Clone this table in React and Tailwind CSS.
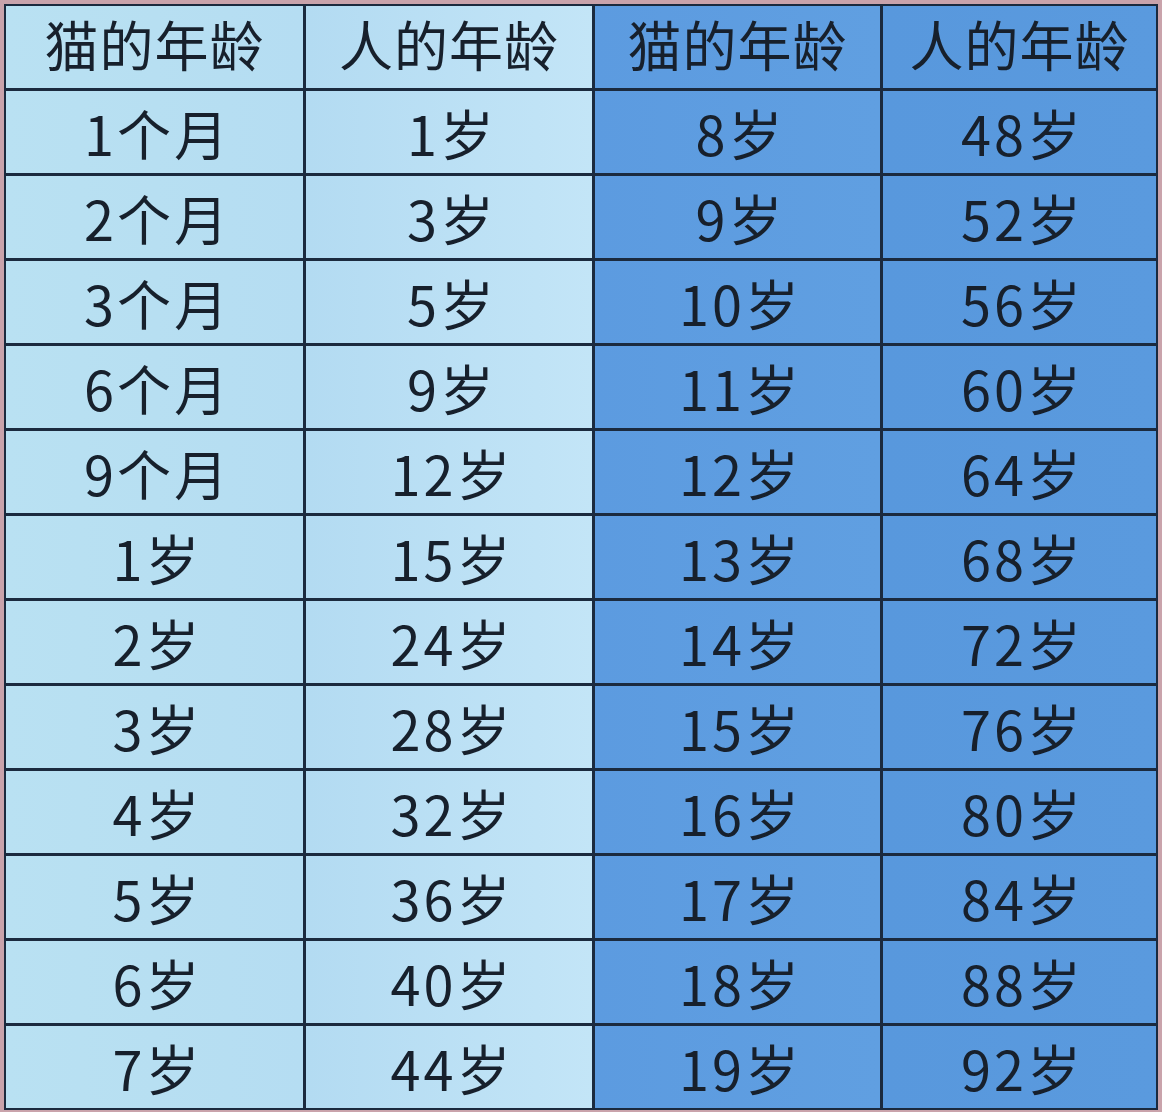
import React from 'react';

const rows = [
  ['1个月', '1岁', '8岁', '48岁'],
  ['2个月', '3岁', '9岁', '52岁'],
  ['3个月', '5岁', '10岁', '56岁'],
  ['6个月', '9岁', '11岁', '60岁'],
  ['9个月', '12岁', '12岁', '64岁'],
  ['1岁', '15岁', '13岁', '68岁'],
  ['2岁', '24岁', '14岁', '72岁'],
  ['3岁', '28岁', '15岁', '76岁'],
  ['4岁', '32岁', '16岁', '80岁'],
  ['5岁', '36岁', '17岁', '84岁'],
  ['6岁', '40岁', '18岁', '88岁'],
  ['7岁', '44岁', '19岁', '92岁'],
];

const header = ['猫的年龄', '人的年龄', '猫的年龄', '人的年龄'];

// one background per column, written out so Tailwind picks them up
const colBg = [
  'bg-gradient-to-r from-[#b9e1f2] to-[#b5ddf2]',
  'bg-gradient-to-r from-[#b3dbf2] to-[#c3e5f7]',
  'bg-gradient-to-r from-[#5c9be0] to-[#609fe1]',
  'bg-gradient-to-r from-[#5898dd] to-[#5a9ade]',
];

function Cell({ text, col, head }) {
  return (
    <div className={`${colBg[col]} flex items-center justify-center text-[#17202c] text-[54px] leading-none ${head ? 'pb-[6px] tracking-[1px]' : 'pt-[2px] tracking-[3px] pl-[6px]'}`}>
      {text}
    </div>
  );
}

export default function App() {
  return (
    <div className="w-[1162px] h-[1112px] bg-[#c9a3ab] pt-[4px] pl-[4px] pr-[4px] pb-[2px]" style={{ fontFamily: '"Noto Sans CJK SC", "Noto Sans", sans-serif' }}>
      <div className="border-2 border-[#1b2a3e] bg-[#1b2a3e]">
        <div className="grid grid-cols-[297px_286px_285px_273px] auto-rows-[82px] gap-[3px]">
          {header.map((h, i) => <Cell key={'h' + i} text={h} col={i} head />)}
          {rows.map((r, ri) => r.map((t, ci) => <Cell key={ri + '-' + ci} text={t} col={ci} />))}
        </div>
      </div>
    </div>
  );
}
